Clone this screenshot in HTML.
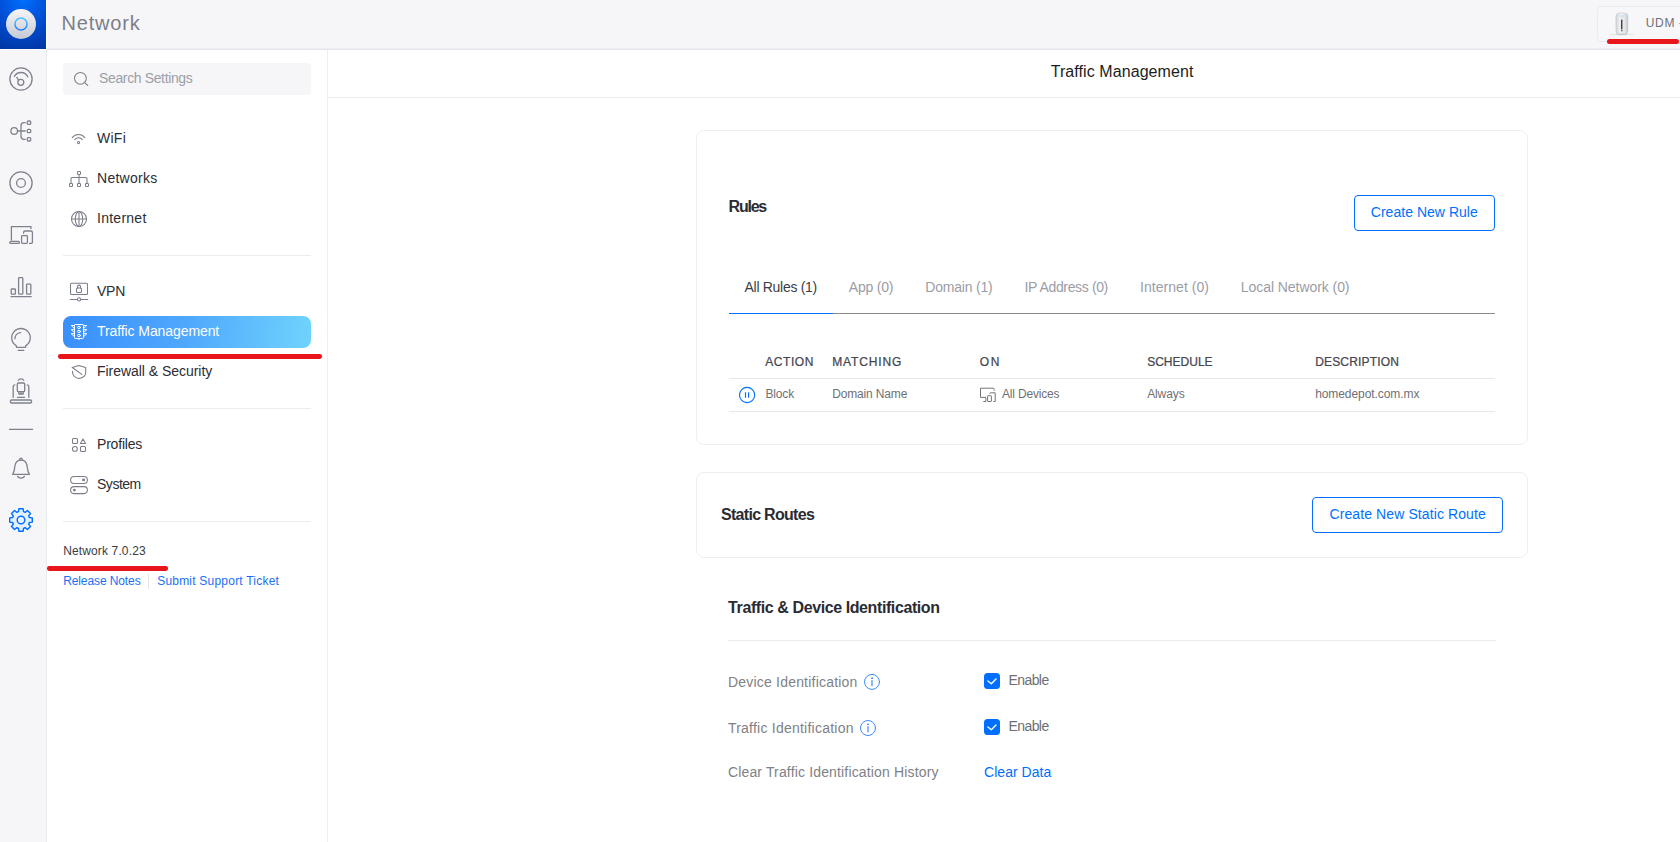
<!DOCTYPE html>
<html lang="en"><head><meta charset="utf-8"><title>Traffic Management - Network</title>
<style>
html,body{margin:0;padding:0;}
body{width:1680px;height:842px;position:relative;overflow:hidden;background:#fff;font-family:"Liberation Sans",Arial,sans-serif;}
.t{position:absolute;display:block;margin:0;padding:0;white-space:pre;line-height:20px;font-family:"Liberation Sans",Arial,sans-serif;font-weight:400;text-decoration:none;}
.abs{position:absolute;}
#topbar{left:47px;top:0;width:1633px;height:48px;background:#f6f6f8;box-shadow:0 1px 0 #eeeff2,0 2px 0 #e3e4e9;}
#rail{left:0;top:50px;width:46px;height:792px;background:#f6f6f8;border-right:1px solid #e9eaee;}
#logo{left:0;top:0;width:46px;height:49px;background:radial-gradient(circle at 50% 0%,#006fff 0%,#004fd6 45%,#0035a2 100%);}
#side{left:47px;top:50px;width:280px;height:792px;background:#fff;border-right:1px solid #eeeef1;}
#search{left:63px;top:63px;width:248px;height:32px;background:#f6f6f8;border-radius:4px;}
.hr{position:absolute;height:1px;background:#ececef;}
#active{left:63px;top:316px;width:248px;height:32px;border-radius:8px;background:linear-gradient(97deg,#398ffd 0%,#50a8fc 50%,#6fd3fd 100%);}
.red{position:absolute;height:4.3px;border-radius:2.15px;background:#e8161b;}
.card{position:absolute;border:1px solid #eeeef0;border-radius:8px;background:#fff;box-sizing:border-box;}
.btn{position:absolute;border:1px solid #006fff;border-radius:4px;box-sizing:border-box;background:#fff;}
.cb{position:absolute;width:16px;height:16px;border-radius:3.5px;background:#006fff;}
svg{position:absolute;overflow:visible;}

</style></head>
<body>
<header id="app-header">
<div id="topbar" class="abs"></div>
<div id="logo" class="abs"></div>
<div id="console" class="abs" style="left:1597px;top:6px;width:100px;height:36px;border:1px solid #ebebef;border-radius:4px;box-sizing:border-box;background:#f7f7f9"></div>
<div class="red" style="left:1607px;top:39px;width:72.4px;height:5px;border-radius:2.5px"></div>
<div class="t" id="t_title" style="left:61.60px;top:13.07px;font-size:20px;font-weight:400;color:#7c7e8a;letter-spacing:0.790px">Network</div>
<span class="t" id="t_udm" style="left:1645.76px;top:12.64px;font-size:12px;font-weight:400;color:#6e707a;letter-spacing:0.676px">UDM</span>
<span class="t" id="t_dash" style="left:1678.7px;top:12.6px;font-size:12px;color:#8a8c96">-</span>
</header>

<nav id="app-rail" aria-label="Main navigation">
<div id="rail" class="abs"></div>
</nav>

<aside id="settings-nav" aria-label="Settings">
<div id="side" class="abs"></div>
<div id="search" class="abs"></div>
<div class="hr" style="left:63px;top:255px;width:248px"></div>
<div class="hr" style="left:63px;top:408px;width:248px"></div>
<div class="hr" style="left:63px;top:521px;width:248px"></div>
<div id="active" class="abs"></div>
<div class="red" style="left:58px;top:354.45px;width:264.2px"></div>
<div class="red" style="left:46.5px;top:566.3px;width:121.5px"></div>
<div class="abs" style="left:148px;top:574px;width:1px;height:15px;background:#e5e5e8"></div>
<span class="t" id="t_search" style="left:99.02px;top:68.15px;font-size:14px;font-weight:400;color:#9c9ea8;letter-spacing:-0.363px">Search Settings</span>
<a class="t" id="t_wifi" href="#" style="left:97.02px;top:128.15px;font-size:14px;font-weight:400;color:#2c2d33;letter-spacing:0.253px">WiFi</a>
<a class="t" id="t_networks" href="#" style="left:97.02px;top:168.15px;font-size:14px;font-weight:400;color:#2c2d33;letter-spacing:0.272px">Networks</a>
<a class="t" id="t_internet" href="#" style="left:97.02px;top:208.15px;font-size:14px;font-weight:400;color:#2c2d33;letter-spacing:0.254px">Internet</a>
<a class="t" id="t_vpn" href="#" style="left:97.02px;top:281.15px;font-size:14px;font-weight:400;color:#2c2d33;letter-spacing:-0.268px">VPN</a>
<a class="t" id="t_traffic" href="#" style="left:97.02px;top:321.15px;font-size:14px;font-weight:400;color:#ffffff;letter-spacing:-0.087px">Traffic Management</a>
<a class="t" id="t_fw" href="#" style="left:97.02px;top:361.15px;font-size:14px;font-weight:400;color:#2c2d33;letter-spacing:-0.037px">Firewall &amp; Security</a>
<a class="t" id="t_profiles" href="#" style="left:97.02px;top:434.15px;font-size:14px;font-weight:400;color:#2c2d33;letter-spacing:-0.204px">Profiles</a>
<a class="t" id="t_system" href="#" style="left:97.02px;top:474.15px;font-size:14px;font-weight:400;color:#2c2d33;letter-spacing:-0.486px">System</a>
<span class="t" id="t_ver" style="left:63.16px;top:540.84px;font-size:12px;font-weight:400;color:#3a3c44;letter-spacing:0.135px">Network 7.0.23</span>
<a class="t" id="t_rel" href="#" style="left:63.16px;top:570.84px;font-size:12px;font-weight:400;color:#1a6ff5;letter-spacing:-0.103px">Release Notes</a>
<a class="t" id="t_sup" href="#" style="left:157.16px;top:570.84px;font-size:12px;font-weight:400;color:#1a6ff5;letter-spacing:0.217px">Submit Support Ticket</a>
</aside>

<main id="content">
<div class="hr" style="left:328px;top:97px;width:1352px;background:#ebebee"></div>
<h1 class="t" id="t_page" style="left:1050.68px;top:62.16px;font-size:16px;font-weight:400;color:#1c1d22;letter-spacing:0.078px">Traffic Management</h1>
<section id="rules">
<div class="card" style="left:696px;top:130px;width:832px;height:315px"></div>
<div class="btn" style="left:1354px;top:195px;width:141px;height:36px"></div>
<div class="hr" style="left:729px;top:313px;width:766px;background:#8a8a8a"></div>
<div class="hr" style="left:729px;top:313px;width:104px;background:#006fff"></div>
<div class="hr" style="left:729px;top:378px;width:766px;background:#e8e8ea"></div>
<div class="hr" style="left:729px;top:411px;width:766px;background:#e8e8ea"></div>
<h2 class="t" id="t_rules" style="left:728.58px;top:196.96px;font-size:16px;font-weight:700;color:#2b2c32;letter-spacing:-1.235px">Rules</h2>
<span class="t" id="t_btn1" style="left:1370.77px;top:202.15px;font-size:14px;font-weight:400;color:#006fff;letter-spacing:0.029px">Create New Rule</span>
<a class="t" id="t_tab1" href="#" style="left:744.52px;top:276.85px;font-size:14px;font-weight:400;color:#3c3e46;letter-spacing:-0.291px">All Rules (1)</a>
<a class="t" id="t_tab2" href="#" style="left:848.77px;top:276.85px;font-size:14px;font-weight:400;color:#9b9da6;letter-spacing:-0.194px">App (0)</a>
<a class="t" id="t_tab3" href="#" style="left:925.27px;top:276.85px;font-size:14px;font-weight:400;color:#9b9da6;letter-spacing:-0.193px">Domain (1)</a>
<a class="t" id="t_tab4" href="#" style="left:1024.52px;top:276.85px;font-size:14px;font-weight:400;color:#9b9da6;letter-spacing:-0.361px">IP Address (0)</a>
<a class="t" id="t_tab5" href="#" style="left:1140.02px;top:276.85px;font-size:14px;font-weight:400;color:#9b9da6;letter-spacing:0.048px">Internet (0)</a>
<a class="t" id="t_tab6" href="#" style="left:1240.77px;top:276.85px;font-size:14px;font-weight:400;color:#9b9da6;letter-spacing:-0.059px">Local Network (0)</a>
<span class="t" id="t_h1" style="left:765.16px;top:351.84px;font-size:12px;font-weight:400;-webkit-text-stroke:0.24px #44464f;color:#44464f;letter-spacing:0.577px">ACTION</span>
<span class="t" id="t_h2" style="left:832.16px;top:351.84px;font-size:12px;font-weight:400;-webkit-text-stroke:0.24px #44464f;color:#44464f;letter-spacing:0.874px">MATCHING</span>
<span class="t" id="t_h3" style="left:979.66px;top:351.84px;font-size:12px;font-weight:400;-webkit-text-stroke:0.24px #44464f;color:#44464f;letter-spacing:1.730px">ON</span>
<span class="t" id="t_h4" style="left:1147.16px;top:351.84px;font-size:12px;font-weight:400;-webkit-text-stroke:0.24px #44464f;color:#44464f;letter-spacing:0.017px">SCHEDULE</span>
<span class="t" id="t_h5" style="left:1315.16px;top:351.84px;font-size:12px;font-weight:400;-webkit-text-stroke:0.24px #44464f;color:#44464f;letter-spacing:0.171px">DESCRIPTION</span>
<span class="t" id="t_c1" style="left:765.46px;top:383.84px;font-size:12px;font-weight:400;color:#6f7075;letter-spacing:-0.166px">Block</span>
<span class="t" id="t_c2" style="left:832.16px;top:384.09px;font-size:12px;font-weight:400;color:#6f7075;letter-spacing:-0.147px">Domain Name</span>
<span class="t" id="t_c3" style="left:1002.06px;top:384.09px;font-size:12px;font-weight:400;color:#6f7075;letter-spacing:-0.178px">All Devices</span>
<span class="t" id="t_c4" style="left:1147.16px;top:384.09px;font-size:12px;font-weight:400;color:#6f7075;letter-spacing:-0.107px">Always</span>
<span class="t" id="t_c5" style="left:1315.16px;top:384.09px;font-size:12px;font-weight:400;color:#6f7075;letter-spacing:-0.077px">homedepot.com.mx</span>
</section>
<section id="static-routes">
<div class="card" style="left:696px;top:472px;width:832px;height:86px"></div>
<div class="btn" style="left:1312px;top:497px;width:191px;height:36px"></div>
<h2 class="t" id="t_static" style="left:720.98px;top:505.06px;font-size:16px;font-weight:700;color:#2b2c32;letter-spacing:-0.701px">Static Routes</h2>
<span class="t" id="t_btn2" style="left:1329.52px;top:504.40px;font-size:14px;font-weight:400;color:#006fff;letter-spacing:0.099px">Create New Static Route</span>
</section>
<section id="identification">
<div class="hr" style="left:728px;top:640px;width:768px;background:#ebebee"></div>
<div class="cb" style="left:984px;top:673px"></div>
<div class="cb" style="left:984px;top:719px"></div>
<h2 class="t" id="t_tdi" style="left:728.08px;top:597.96px;font-size:16px;font-weight:700;color:#2b2c32;letter-spacing:-0.404px">Traffic &amp; Device Identification</h2>
<label class="t" id="t_di" style="left:727.92px;top:672.15px;font-size:14px;font-weight:400;color:#808186;letter-spacing:0.208px">Device Identification</label>
<label class="t" id="t_en1" style="left:1008.52px;top:669.95px;font-size:14px;font-weight:400;color:#6e6f74;letter-spacing:-0.587px">Enable</label>
<label class="t" id="t_ti" style="left:727.92px;top:718.15px;font-size:14px;font-weight:400;color:#808186;letter-spacing:0.235px">Traffic Identification</label>
<label class="t" id="t_en2" style="left:1008.52px;top:715.95px;font-size:14px;font-weight:400;color:#6e6f74;letter-spacing:-0.587px">Enable</label>
<label class="t" id="t_cl" style="left:727.92px;top:761.85px;font-size:14px;font-weight:400;color:#808186;letter-spacing:0.154px">Clear Traffic Identification History</label>
<a class="t" id="t_cd" href="#" style="left:984.02px;top:761.85px;font-size:14px;font-weight:400;color:#006fff;letter-spacing:0.038px">Clear Data</a>
</section>
</main>
<svg aria-hidden="true" width="1680" height="842" viewBox="0 0 1680 842" style="left:0;top:0" fill="none" stroke-linecap="round" stroke-linejoin="round">
<defs>
<linearGradient id="disc" x1="0" y1="0" x2="0" y2="1"><stop offset="0" stop-color="#f6f6f8"/><stop offset="1" stop-color="#c6c9d3"/></linearGradient>
<linearGradient id="ring" x1="0" y1="0" x2="0" y2="1"><stop offset="0" stop-color="#4fc3ff"/><stop offset="1" stop-color="#1a7bff"/></linearGradient>
<linearGradient id="udm" x1="0" y1="0" x2="1" y2="0"><stop offset="0" stop-color="#cfd1d5"/><stop offset="0.3" stop-color="#eef0f1"/><stop offset="0.75" stop-color="#e4e6e8"/><stop offset="1" stop-color="#c2c4c9"/></linearGradient>
</defs>
<!-- logo -->
<circle cx="21" cy="24" r="15" fill="url(#disc)"/>
<circle cx="21" cy="24" r="6.050" stroke="url(#ring)" stroke-width="1.400"/>

<!-- rail icons -->
<g stroke="#7f818d" stroke-width="1.3">
<!-- dashboard -->
<circle cx="21" cy="79" r="11.1"/>
<circle cx="20.8" cy="82.3" r="3"/>
<path d="M14.3 76.4 A7.6 7.6 0 0 1 27.8 76.8"/>
<path d="M18.6 80.2 L16.8 77.4"/>
<!-- topology -->
<circle cx="14.2" cy="131" r="3.3"/>
<path d="M17.6 131 H25.2"/>
<path d="M25.2 122.7 H24 A3 3 0 0 0 21 125.7 V136.3 A3 3 0 0 0 24 139.3 H25.2"/>
<rect x="27.3" y="121" width="3.4" height="3.4" rx="1"/>
<rect x="27.3" y="129.3" width="3.4" height="3.4" rx="1"/>
<rect x="27.3" y="137.6" width="3.4" height="3.4" rx="1"/>
<!-- clients circle -->
<circle cx="21" cy="183" r="11.1"/>
<circle cx="21" cy="183" r="4.4"/>
<!-- devices -->
<path d="M11.4 240 V226.6 H31 V228.6"/>
<rect x="9.8" y="241.4" width="9.6" height="2" rx="1"/>
<rect x="21.6" y="235.6" width="5.8" height="7.8" rx="0.8"/>
<path d="M23.6 233.2 V232.4 A1.4 1.4 0 0 1 25 231 H31 A1.4 1.4 0 0 1 32.4 232.4 V242.2 A1.2 1.2 0 0 1 31.2 243.4 H29.6"/>
<!-- stats -->
<rect x="11.2" y="289" width="4.2" height="5.2" rx="0.6"/>
<rect x="18.6" y="277.6" width="4.2" height="16.6" rx="0.8"/>
<rect x="26.6" y="284.2" width="4.2" height="10" rx="0.6"/>
<path d="M11 296.7 H31.2"/>
<!-- bulb -->
<path d="M16.4 347.3 V345.9 A9.3 9.3 0 1 1 25.6 345.9 V347.3 Z"/>
<path d="M18.2 350.3 H23.8"/>
<path d="M14.9 338.6 A6.3 6.3 0 0 1 20.6 332.6"/>
<!-- dock -->
<rect x="10.4" y="400" width="21.2" height="3" rx="1.3"/>
<path d="M14.8 384.8 A1.7 1.7 0 0 0 13.2 386.5 V397.3"/>
<path d="M27.2 384.8 A1.7 1.7 0 0 1 28.8 386.5 V397.3"/>
<rect x="17.3" y="383" width="7.4" height="8.6" rx="1.2"/>
<path d="M18.3 380.4 A2.8 2.2 0 0 1 23.7 380.4"/>
<path d="M18.8 391.8 V394 H23.2 V391.8 M21 392 V394"/>
<path d="M17.4 397.3 H24.6"/>
<!-- sep -->
<path d="M9.4 429.4 H32.6" stroke-width="1.1"/>
<!-- bell -->
<path d="M12.6 474.3 H29.4 C27.3 471.5 27.5 468 27 465.5 C26.4 462.3 24.2 460.2 21 460.2 C17.8 460.2 15.6 462.3 15 465.500 C14.5 468 14.7 471.5 12.600 474.3 Z"/>
<path d="M19.8 460.4 V459.4 A1.2 1.2 0 0 1 22.2 459.4 V460.4"/>
<path d="M17.6 476.4 A3.6 2.6 0 0 0 24.4 476.4"/>
</g>
<!-- gear -->
<g stroke="#006fff" stroke-width="1.4">
<path id="gearp" fill="#e3eefe" d="M18.51 511.66 L18.83 508.71 L23.17 508.71 L23.49 511.66 A8.70 8.70 0 0 1 25.14 512.35 L27.45 510.48 L30.52 513.55 L28.65 515.86 A8.70 8.70 0 0 1 29.34 517.51 L32.29 517.83 L32.29 522.17 L29.34 522.49 A8.70 8.70 0 0 1 28.65 524.14 L30.52 526.45 L27.45 529.52 L25.14 527.65 A8.70 8.70 0 0 1 23.49 528.34 L23.17 531.29 L18.83 531.29 L18.51 528.34 A8.70 8.70 0 0 1 16.86 527.65 L14.55 529.52 L11.48 526.45 L13.35 524.14 A8.70 8.70 0 0 1 12.66 522.49 L9.71 522.17 L9.71 517.83 L12.66 517.51 A8.70 8.70 0 0 1 13.35 515.86 L11.48 513.55 L14.55 510.48 L16.86 512.35 A8.70 8.70 0 0 1 18.51 511.66 Z"/>
<circle cx="21" cy="520" r="3.8" fill="#edf3fe"/>
</g>

<!-- search icon -->
<g stroke="#7f818d" stroke-width="1.05">
<circle cx="80.400" cy="78.300" r="5.900"/><path d="M84.700 82.600 L87.800 85.500"/>
</g>

<!-- sidebar icons -->
<g stroke="#7a7d8a" stroke-width="1.05">
<!-- wifi -->
<path d="M72.2 137.63 A8 8 0 0 1 84.9 137.63"/>
<path d="M74.8 139.67 A4.7 4.7 0 0 1 82.3 139.67"/>
<circle cx="78.55" cy="142.6" r="1.05"/>
<!-- networks -->
<rect x="77.5" y="171.45" width="3" height="3" rx="0.8"/>
<rect x="69.5" y="183.5" width="3" height="3" rx="0.8"/>
<rect x="77.5" y="183.5" width="3" height="3" rx="0.8"/>
<rect x="85.5" y="183.5" width="3" height="3" rx="0.8"/>
<path d="M79 174.6 V183.4 M71 183.4 V178.5 A1 1 0 0 1 72 177.5 H86 A1 1 0 0 1 87 178.5 V183.4"/>
<!-- globe -->
<circle cx="79" cy="219" r="7.5"/>
<ellipse cx="79" cy="219" rx="3.7" ry="7.5"/>
<path d="M71.5 219 H86.5 M79 211.5 V226.5"/>
<!-- vpn -->
<rect x="70.5" y="283.3" width="17" height="11.1" rx="1"/>
<rect x="76.5" y="287.9" width="5" height="4.6" rx="1"/>
<path d="M77.5 287.9 V286.6 A1.5 1.5 0 0 1 80.5 286.6 V287.9"/>
<path d="M70.2 299.4 H77.3 M80.7 299.4 H87.800"/>
<circle cx="79" cy="299.4" r="1.6"/>
<!-- shield -->
<path d="M72.3 367.500 L78.8 365.4 L85.7 367.500 V372.500 C85.7 376 82.2 378 78.8 378.6 C75.500 378 72.4 375.500 72.4 371.3"/>
<path d="M72.3 367.500 L81.8 374.4"/>
<!-- profiles -->
<rect x="72.5" y="438.500" width="5" height="5" rx="1"/>
<path d="M83 438.900 L85.600 443.400 H80.400 Z"/>
<circle cx="74.900" cy="448.900" r="2.450"/>
<rect x="80.500" y="446.500" width="5" height="5" rx="1"/>
<!-- system -->
<rect x="70.600" y="476.400" width="16.800" height="7" rx="3.500"/>
<rect x="70.600" y="486.600" width="16.800" height="7" rx="3.500"/>
<circle cx="83.600" cy="479.900" r="0.900" fill="#7a7d8a"/>
<circle cx="74.400" cy="490.100" r="0.900" fill="#7a7d8a"/>
</g>
<!-- traffic light (white) -->
<g stroke="#ffffff" stroke-width="1">
<rect x="74.500" y="324.500" width="9" height="14" rx="0.800"/>
<ellipse cx="79" cy="327.400" rx="1.500" ry="1.100"/><ellipse cx="79" cy="331.400" rx="1.500" ry="1.100"/><ellipse cx="79" cy="335.500" rx="1.500" ry="1.100"/>
<path d="M79 338.500 V339.700"/>
<path d="M74.500 325.500 H71.200 L74.500 328.600 M74.500 329.600 H71.200 L74.500 332.700 M74.500 333.700 H71.200 L74.500 336.800"/>
<path d="M83.500 325.500 H86.800 L83.500 328.600 M83.500 329.600 H86.800 L83.500 332.700 M83.500 333.700 H86.800 L83.500 336.800"/>
</g>

<!-- UDM device -->
<ellipse cx="1621.5" cy="34.4" rx="13" ry="1" fill="#e6e7ea"/>
<ellipse cx="1621.8" cy="33.800" rx="6" ry="0.9" fill="#b9bbc0"/>
<rect x="1615.9" y="12.9" width="12" height="21" rx="3.4" fill="url(#udm)" stroke="#c6c8ce" stroke-width="0.5"/>
<path d="M1617 15.700 Q1621.900 16.700 1626.800 15.700" stroke="#bfdcf2" stroke-width="0.9"/>
<rect x="1621.100" y="19.400" width="1.300" height="10" rx="0.5" fill="#2f3138" stroke="none"/>
<rect x="1621.100" y="30.200" width="1.300" height="1" fill="#2f3138" stroke="none"/>

<!-- pause icon -->
<g stroke="#006fff" stroke-width="1.1">
<circle cx="747.100" cy="395" r="7.600"/>
<path d="M745.500 392.300 V397.700 M748.600 392.300 V397.700" stroke-width="1.15" stroke-linecap="butt"/>
</g>
<!-- all devices icon -->
<g stroke="#737478" stroke-width="1" stroke-linejoin="miter" stroke-linecap="butt">
<path d="M986 397.4 H980.5 V388.2 H993.2 A1 1 0 0 1 994.2 389.2 V390.600"/>
<path d="M983.3 401.5 H986 M985.9 398 V401.5"/>
<rect x="987.6" y="395.7" width="3.8" height="5.8" rx="0.5"/>
<path d="M989.600 393.800 A1 1 0 0 1 990.600 392.800 H995.2 V401.500 H993.300"/>
</g>
<!-- info icons -->
<g stroke="#3f8cf6" stroke-width="1">
<circle cx="872" cy="681.900" r="7.500"/>
<path d="M872 680.500 V685.700" stroke-width="1.2"/><circle cx="872" cy="678.200" r="0.500" fill="#3f8cf6"/>
<circle cx="868" cy="728" r="7.500"/>
<path d="M868 726.600 V731.800" stroke-width="1.2"/><circle cx="868" cy="724.300" r="0.500" fill="#3f8cf6"/>
</g>
<!-- check marks -->
<g stroke="#ffffff" stroke-width="1.400">
<path d="M987.900 681 L991.300 683.700 L996 678.900"/>
<path d="M987.900 727 L991.300 729.700 L996 724.900"/>
</g>
</svg>


</body></html>
